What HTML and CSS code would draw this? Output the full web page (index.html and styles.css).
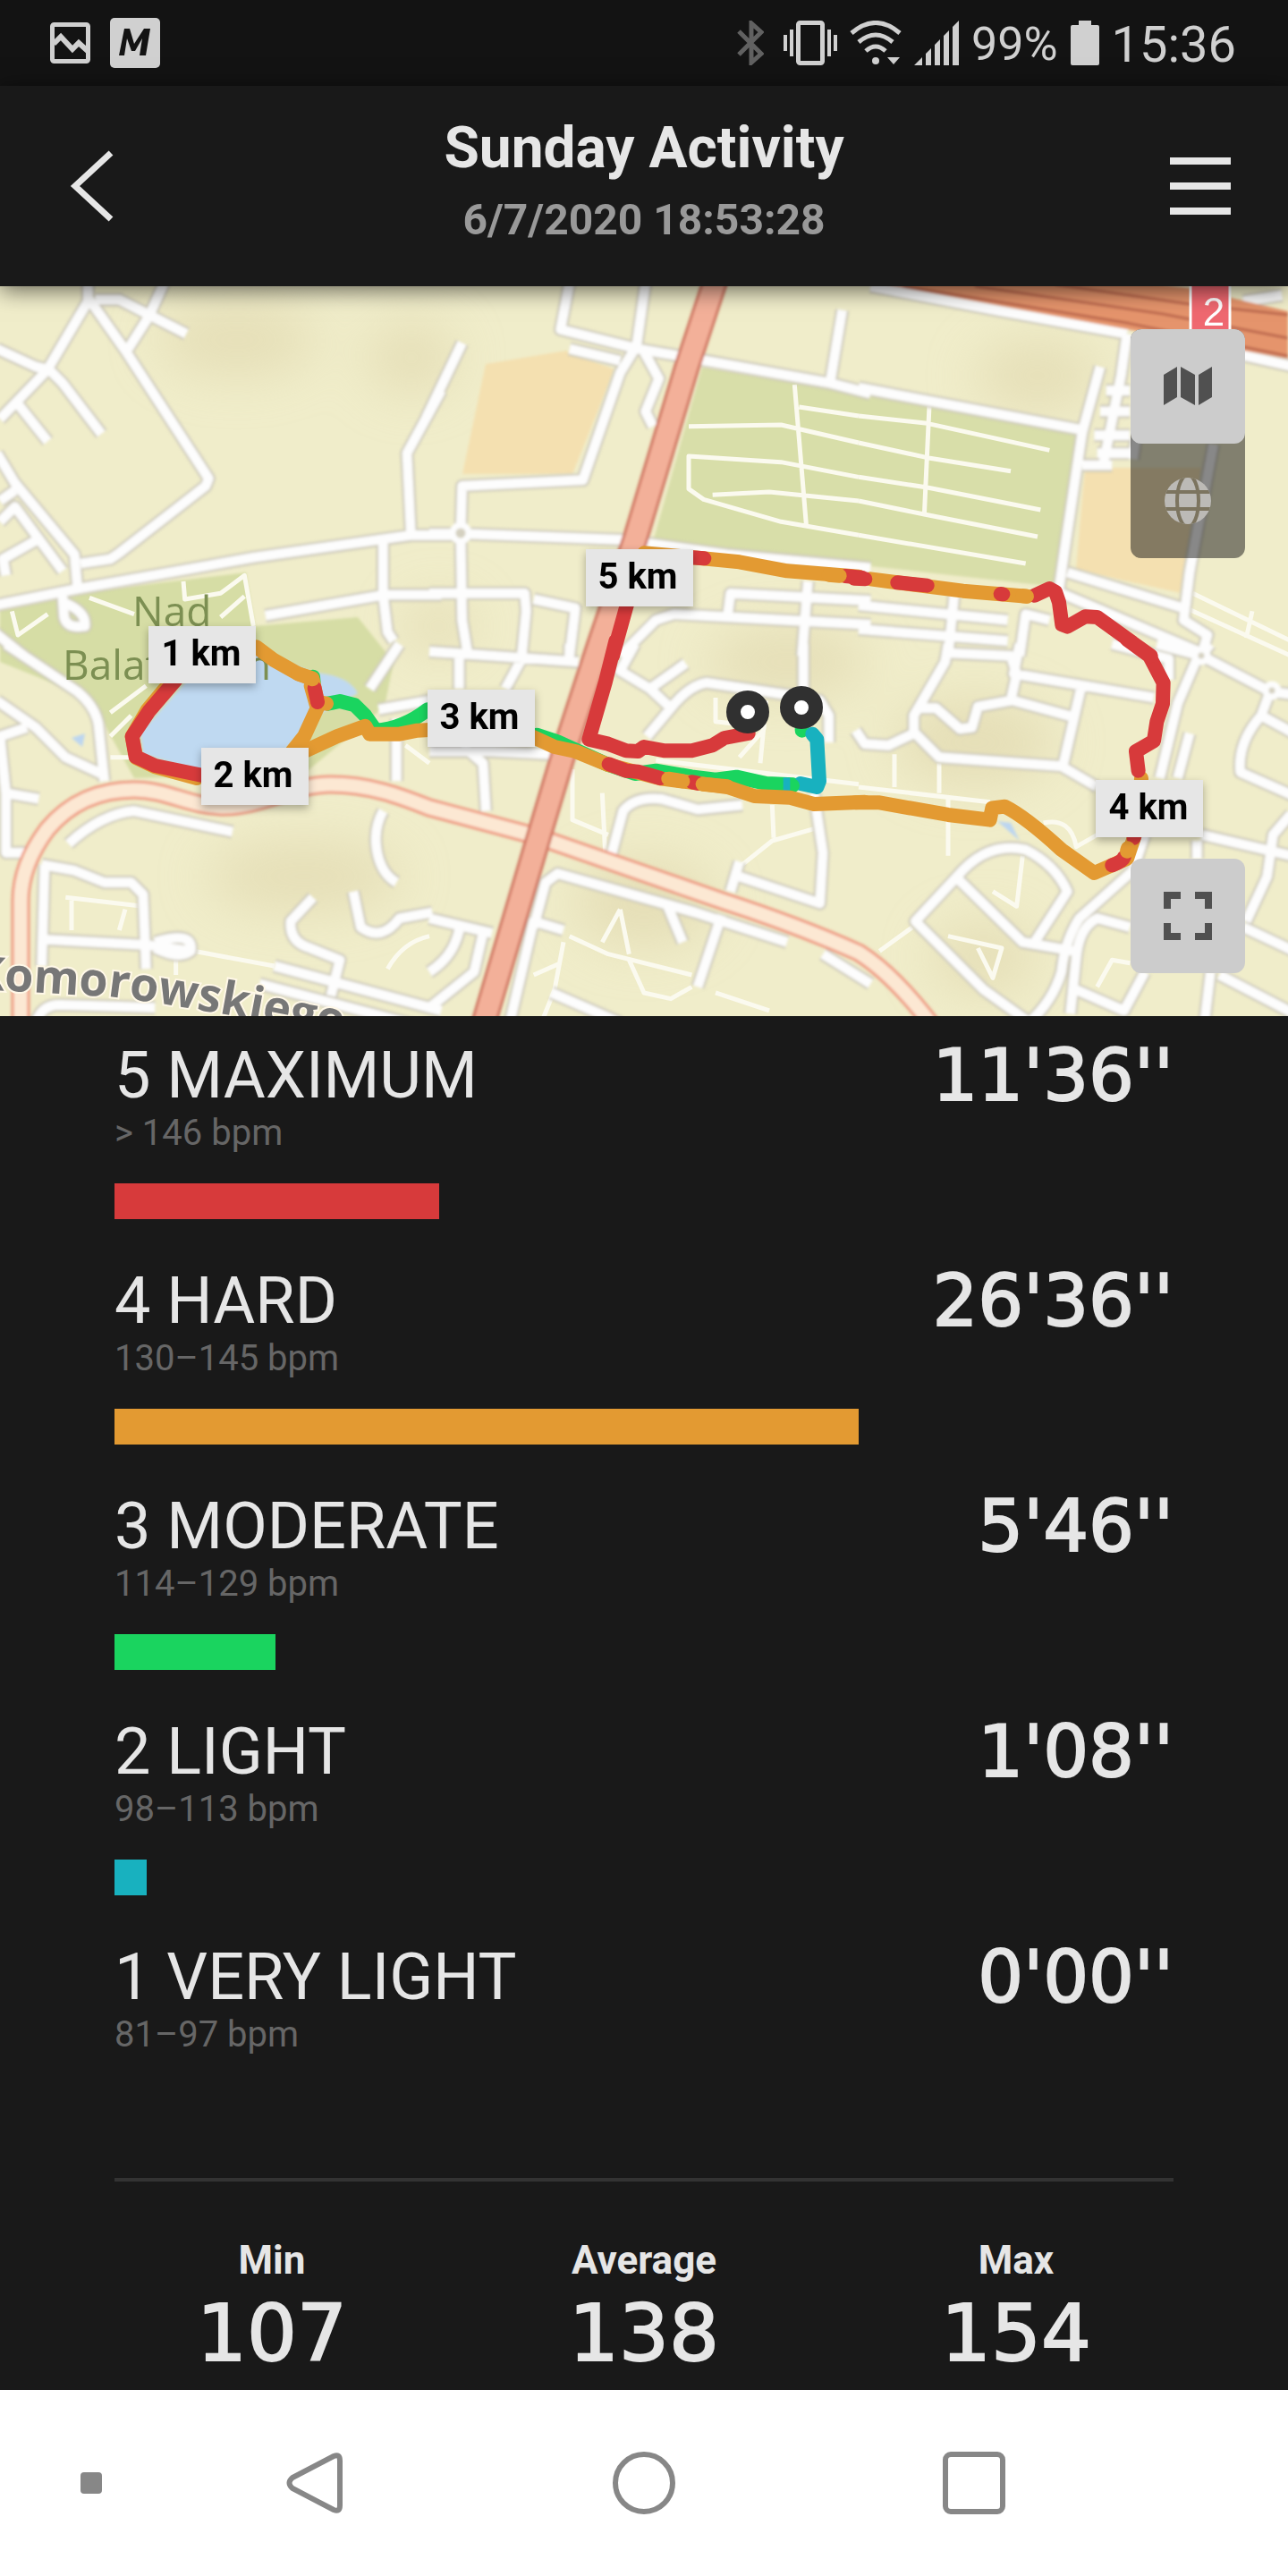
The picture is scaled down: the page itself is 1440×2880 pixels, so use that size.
FILE: index.html
```html
<!DOCTYPE html>
<html lang="en">
<head>
<meta charset="utf-8">
<meta name="viewport" content="width=device-width, initial-scale=1">
<title>Sunday Activity</title>
<link rel="stylesheet" href="styles.css">
</head>
<body>
<div class="status">
  <div class="status-group">
    <svg class="status-photo" viewBox="0 0 45 46" aria-hidden="true"><rect x="2.500" y="2.500" width="40" height="41" rx="2" fill="none" stroke="currentColor" stroke-width="5"/><path d="M4 24 12 16 25 30 32 23 42 32" fill="none" stroke="currentColor" stroke-width="6"/></svg>
    <svg class="status-app" viewBox="0 0 56 56" aria-hidden="true"><rect width="56" height="56" rx="5" fill="currentColor"/><path d="M10 42 16 12H22L27 29 38 12H45L40 42H33L36 23 28 37H24L19 23 16 42Z" fill="#131313"/></svg>
  </div>
  <div class="status-group">
    <svg class="status-bt" viewBox="0 0 30 50" aria-hidden="true"><path d="M2 12 27 37 16 47V3L27 13 2 38" fill="none" stroke="currentColor" stroke-width="5"/></svg>
    <svg class="status-vibrate" viewBox="0 0 60 50" aria-hidden="true"><path d="M2 16V34M9 10V40M51 10V40M58 16V34" stroke="currentColor" stroke-width="4"/><rect x="16.500" y="2.500" width="27" height="45" rx="2" fill="none" stroke="currentColor" stroke-width="5"/></svg>
    <svg class="status-wifi" viewBox="0 0 58 50" aria-hidden="true"><g fill="none" stroke="currentColor" stroke-width="5"><path d="M2 14Q29-9 56 14M10 24Q29 8 48 24M18 34Q29 24 40 34"/></g><circle cx="29" cy="45" r="4" fill="currentColor"/><path d="M42 41H56L49 49Z" fill="currentColor"/></svg>
    <svg class="status-signal" viewBox="0 0 50 50" aria-hidden="true"><path d="M0 50 9 41V50ZM13 37 19 31V50H13ZM23 27 29 21V50H23ZM33 17 39 11V50H33ZM43 7 50 0V50H43Z" fill="currentColor"/></svg>
    <span class="status-battery-text">99%</span>
    <svg class="status-battery" viewBox="0 0 32 50" aria-hidden="true"><path d="M9 0H23V5H30Q32 5 32 7V48Q32 50 30 50H2Q0 50 0 48V7Q0 5 2 5H9Z" fill="currentColor"/></svg>
    <time class="status-time">15:36</time>
  </div>
</div>

<header class="header">
  <button class="header-button" type="button" aria-label="Back"><svg viewBox="0 0 68 80" aria-hidden="true"><path d="M60 3 20 40 60 77" fill="none" stroke="currentColor" stroke-width="7"/></svg></button>
  <div class="header-text">
    <h1>Sunday Activity</h1>
    <p>6/7/2020 18:53:28</p>
  </div>
  <button class="header-button" type="button" aria-label="Menu"><svg viewBox="0 0 68 80" aria-hidden="true"><path d="M0 12H68M0 40H68M0 68H68" stroke="currentColor" stroke-width="8"/></svg></button>
</header>

<section class="map" aria-label="Route map">
<svg class="map-canvas" viewBox="0 320 1440 816" preserveAspectRatio="xMidYMid slice">
  <defs>
    <filter id="soft" x="-20%" y="-20%" width="140%" height="140%"><feGaussianBlur stdDeviation="28"/></filter>
    <filter id="edge"><feGaussianBlur stdDeviation="1.500"/></filter>
    <filter id="label-shadow" x="-20%" y="-30%" width="140%" height="180%"><feDropShadow dx="0" dy="4" stdDeviation="5" flood-opacity=".3"/></filter>
    <path id="street-name" d="M-30 1106 50 1110 130 1115C200 1124 260 1135 440 1170"/>
    <g id="roads">
      <g transform="translate(0 310) scale(.33333)">
        <path d="M295 20V80L165 300 145 325 0 475M-10 240 120 300 165 310 210 355 340 525M60 425 160 550M320 75H400L625 190M300 75 420 245 700 675 690 700 400 925 370 945 270 960M550 20 500 130 430 240M-10 590 50 690 250 930 260 1040M0 750 50 715M0 820 50 770 210 985M125 880 10 945 20 1000M-40 1105 260 1045 850 940 1380 865H1560M1480 380 1365 590 1378 860M890 1135 1290 1065H1480M1285 890V1065L1300 1190 1320 1220M210 1070 215 1140Q225 1180 285 1170 290 1120 210 1090M-20 1190 80 1270"/>
      </g>
      <g transform="translate(480 310) scale(.33333)">
        <path d="M470 20 440 175 700 240 900 275 1345 355 1480 390M725 20 695 230 640 320 515 680 110 700 105 860M470 240 640 280M720 250 770 340 725 450 750 500M110 220-10 470M1385 110 1345 350M0 860H105L640 880 1000 930 1480 975M105 860 110 1150 130 1270M0 1060H320L325 1120 310 1270M350 1080 490 1110 470 1270M1270 1020 1250 1270M1000 1140 1010 1060 1480 1085M640 1270 760 1150 820 1130 1480 1165"/>
      </g>
      <g transform="translate(960 310) scale(.33333)">
        <path d="M40 30 460 110 900 190M1280 260 1460 300M0 370 740 510M900 190 880 330 820 630M810 300 750 520 690 920 670 1060M750 630H850M930 540 920 610M830 380H910M810 450H910M790 530H910M800 590H910M1190 560 1110 990 1090 1150 1170 1200 1150 1270M700 990 1090 1110M680 1060 1150 1260M540 1270 560 1130 640 1150M320 1070 300 1270M0 1100 500 1150M0 1180 500 1220M1290 80 1420 60"/>
      </g>
      <g transform="translate(0 720) scale(.33333)">
        <path d="M20 0 260 160Q320 210 330 270L350 460M-10 190 120 280 220 380 350 440M90 280 0 310 20 500 130 520M20 500V700H110M140 740 250 760 350 800H440L480 840 490 1090M150 740 140 1080M130 990 500 1010 640 1030M520 1000Q650 960 640 1030 600 1060 520 1020M230 670Q340 570 450 560L780 630M1240 150 1340 0M1270 220 1440 190M1330 250V460M1285 560C1240 640 1260 760 1330 800M1050 850 975 930Q970 1000 1040 1020L1140 1060 1110 1180M1185 830 1210 950Q1280 1000 1340 920L1450 900M920 1080 1480 1230M870 1140 1400 1280M120 1270Q140 1210 200 1210L520 1220"/>
      </g>
      <g transform="translate(480 720) scale(.33333)">
        <path d="M0 25 500 60M100 40V150M310 50 255 150M470 0V50M690 0 640 90 740 150 810 215 730 310M740 150 860 65M810 215Q870 140 930 130L1200 170 1310 190 1340 240V330M1255 0V170M110 340 180 400 190 560M0 360H200L410 370M610 710 650 560Q690 510 780 520L900 555 1050 540M1290 500 1320 700 1310 870 1040 780M1010 830 1040 730M350 950 390 800 430 770 890 900 1200 1000M900 1150 980 910M800 880 850 1000M0 920 210 970M100 960Q80 1050 0 1100M180 970 150 1100 0 1220M270 1270 350 930 450 960M410 1170 640 1270M1320 1040 1480 1140"/>
      </g>
      <g transform="translate(960 720) scale(.33333)">
        <path d="M300 0 290 60 185 240V300L100 340 20 335-10 290M300 30 510 40 530 100 510 190 400 210 380 280 340 285 260 215H200M540 0 520 100 990 180M520 190 720 245M745 150 685 410M190 300 270 380 680 410 800 480M850 0 1040 50V120M1000 0 1150 40 1380 160 1460 170M1180 0 1130 60 1070 200 1010 450M1110 300 1070 450M1380 160 1350 240 1460 300M1350 240Q1270 330 1280 430L1460 510M1450 570 1390 640 1370 780 1300 930M1150 640 1450 710M1135 660V720M960 640 920 760 740 920Q690 1000 680 1100 650 1200 570 1270M560 1260 420 1160 190 930 330 780Q430 660 560 690 660 740 700 830L590 1000M335 790 550 1000 720 1030M910 950 800 920Q740 950 730 1050L710 1240M730 1160 890 1230 960 1100M1290 950 1460 1030M1210 1110 1460 1240M1180 1100 1160 1270"/>
      </g>
    </g>
    <g id="lanes">
      <g transform="translate(0 310) scale(.33333)"><path d="M615 1020 620 1080 740 1060 820 1000 850 1170M300 1075 450 1130M40 1120 60 1200 160 1130M740 1140 820 1070"/></g>
      <g transform="translate(480 310) scale(.33333)"><path d="M1225 360 1265 840M1240 435 1440 465M870 500 1180 495 1440 555M1440 670 1180 620 870 600V710L920 745 1180 820 1440 865M950 730 1140 720 1440 750"/></g>
      <g transform="translate(960 310) scale(.33333)"><path d="M0 465 230 490 640 580M0 555 230 605 510 650M0 670 230 705 610 780M0 750 220 795 600 870M0 865 560 960M238 410 220 800"/></g>
      <g transform="translate(960 310) scale(.33333)"><path d="M1120 1060 1450 1220M1100 1110 1450 1270M1320 1120 1300 1210"/></g>
      <g transform="translate(0 720) scale(.33333)"><path d="M220 850 480 880M240 860V960M420 890 400 960M650 1030 920 1080M370 230 490 140M370 310 440 240M370 380H440M1360 340 1440 400M590 1050V1110M1300 1090Q1350 1000 1440 980"/></g>
      <g transform="translate(480 720) scale(.33333)"><path d="M480 420V590L600 640M580 500 590 700M640 890 580 1000M640 890 670 1040M470 980 600 1040 880 1110M450 1000 420 1160 380 1260M670 1060 720 1170 810 1190 880 1150M350 1110 440 1070M1150 540 1155 650M1050 740 1150 660 1290 620M960 180V260L1130 280M1130 190 1110 400M760 390 1440 470M1120 290 1040 380M960 1170 1140 1230"/></g>
      <g transform="translate(960 720) scale(.33333)"><path d="M0 480 440 530M300 520V710M120 370V480M270 400V500M180 950 70 1030M550 710 530 880 450 830M300 980 480 1020 450 1120 400 1020M800 1150 850 1060 910 1070M620 600Q710 580 730 680L800 640"/></g>
    </g>
  </defs>

  <rect y="310" width="1440" height="840" fill="#f0edca"/>
  <g filter="url(#soft)" fill="#ddd3a8" opacity=".55">
    <ellipse cx="265" cy="380" rx="90" ry="40"/><ellipse cx="460" cy="400" rx="50" ry="40"/><ellipse cx="340" cy="980" rx="110" ry="40"/><ellipse cx="880" cy="740" rx="90" ry="40"/><ellipse cx="1160" cy="420" rx="70" ry="40"/><ellipse cx="1090" cy="830" rx="90" ry="50"/><ellipse cx="720" cy="1010" rx="80" ry="50"/><ellipse cx="490" cy="700" rx="40" ry="30"/><ellipse cx="1100" cy="1070" rx="60" ry="40"/>
  </g>
  <g filter="url(#edge)">
    <path d="M0 682 110 660 275 640 285 700 400 690 440 740 430 790 340 865 150 870 100 780 0 740Z" fill="#d6dda5"/>
    <path d="M785 410 960 438 1207 482 1180 656 730 606Z" fill="#d8dea9"/>
    <path d="M543 407 633 392 687 413 640 530 517 530ZM1213 523 1343 523 1320 663 1203 637Z" fill="#f4e0b0"/>
    <path d="M207 763 290 728 350 752Q390 755 400 775L367 793 350 803 320 837 227 863 160 843 157 820Z" fill="#bfd9f1"/>
    <path d="M80 825 95 820 92 835ZM1115 918 1130 920 1140 940Z" fill="#bcd6f0"/>
  </g>
  <use href="#lanes" fill="none" stroke="#fbfaef" stroke-width="15" stroke-linejoin="round"/>
  <g filter="url(#edge)" fill="none" stroke-linejoin="round">
    <use href="#roads" stroke="#cecabc" stroke-width="46"/>
    <use href="#roads" stroke="#fdfdfd" stroke-width="32"/>
    <circle cx="515" cy="596" r="9" stroke="#fdfdfd" stroke-width="7" fill="#d4d0c0"/>
    <circle cx="1343" cy="733" r="7" stroke="#fdfdfd" stroke-width="7" fill="#d4d0c0"/>
    <circle cx="1422" cy="772" r="7" stroke="#fdfdfd" stroke-width="7" fill="#d4d0c0"/>
    <g id="ring-road">
      <path d="M23 1150V1007Q23 967 53 927 90 883 150 883C187 883 213 902 250 902 293 902 327 877 370 877 413 877 447 890 480 903L600 935 807 1007Q893 1035 960 1065 1000 1090 1045 1150" stroke="#ee9a82" stroke-width="21"/>
      <path d="M23 1150V1007Q23 967 53 927 90 883 150 883C187 883 213 902 250 902 293 902 327 877 370 877 413 877 447 890 480 903L600 935 807 1007Q893 1035 960 1065 1000 1090 1045 1150" stroke="#fce8d3" stroke-width="15"/>
    </g>
    <path d="M801 310 768 410 710 603 670 720 633 833 607 920 539 1150" stroke="#cf7461" stroke-width="29"/>
    <path d="M801 310 768 410 710 603 670 720 633 833 607 920 539 1150" stroke="#f3b099" stroke-width="23"/>
    <path d="M990 318 1147 300 1330 322 1440 348V401L1260 368Z" fill="#e5946c"/>
    <path d="M1010 320 1260 361 1440 398M1090 320 1300 351 1440 378M1180 318 1330 340 1440 352" stroke="#bc684e" stroke-width="3"/>
  </g>
  <rect x="1331" y="312" width="44" height="60" fill="#ef6870" stroke="#fff" stroke-width="3"/>
  <text class="route-number" x="1357" y="364">2</text>
  <text class="place" x="148" y="700">Nad</text>
  <text class="place" x="70" y="760">Balatonem</text>
  <text class="street"><textPath href="#street-name">Komorowskiego</textPath></text>

  <g fill="none" stroke-width="48" stroke-linecap="round" stroke-linejoin="round">
    <g transform="translate(0 720) scale(.33333)">
      <path class="z3" d="M1434 220Q1350 285 1260 290L1225 240 1190 205 1140 192 1100 200"/>
      <path class="z3" d="M1050 110 1052 130"/>
      <path class="z4" d="M570 130 495 220 443 310 457 382 520 412 660 450M860 10 920 55 1000 100 1048 115 1065 195 1095 200M1043 140 1064 215 1020 310 980 360M1440 288 1400 290 1340 302 1240 302 1225 275 1130 310 1010 365"/>
      <path class="z5" d="M590 120 500 225 443 310 455 378 520 408 700 445M1055 148 1065 195"/>
      <path class="z4" d="M1000 100 1048 118"/>
    </g>
    <g transform="translate(480 720) scale(.33333)">
      <path class="z3" d="M1250 230V290M360 305 430 328 600 405 690 435 760 425 880 445 960 455 1030 446 1130 468 1220 472"/>
      <path class="z2" d="M1285 302 1300 320 1308 460 1300 480 1245 468"/>
      <path class="z3" d="M1205 475H1218"/>
      <path class="z2" d="M1187 472H1210" stroke-linecap="butt"/>
      <path class="z4" d="M340 308 420 345 490 360 600 405 780 452 870 463 1000 480 1090 510 1210 515 1290 537 1460 530"/>
      <path class="z5" d="M602 403 660 425 700 428 775 450M882 463 900 467"/>
      <path class="z4" d="M802 452 850 460M917 470 1000 478"/>
      <path class="z5" d="M625-10 590 130 535 320 600 335 660 358 700 360 720 345 790 358H880L950 340 990 315 1070 300"/>
    </g>
    <g transform="translate(960 720) scale(.33333)">
      <path class="z4" d="M-10 532H70L300 573 440 590 448 550 490 545Q560 580 680 690L790 768 900 720 940 600 948 450"/>
      <path class="z5" d="M850 742Q885 730 890 715M923 650 930 620M938 425 930 360 990 325 1000 260 1020 200 1022 130 975 40 900-15"/>
      <path class="z4" d="M900 695 903 685"/>
    </g>
    <g transform="translate(480 310) scale(.33333)">
      <path class="z4" d="M720 925 940 945 1040 955 1200 985 1440 1004"/>
      <path class="z5" d="M860 938 922 943M665 1090 615 1270M1395 1002 1450 1007"/>
      <path class="z4" d="M1340 998 1376 1001"/>
    </g>
    <g transform="translate(960 310) scale(.33333)">
      <path class="z4" d="M40 1012 100 1020 350 1052 565 1070"/>
      <path class="z5" d="M-15 1010 22 1012M130 1024 230 1034M476 1062 484 1063M590 1067 640 1044 660 1055 672 1090 682 1165 700 1172 760 1138 800 1140 980 1270"/>
      <path class="z4" d="M550 1069 564 1070"/>
    </g>
  </g>
  <g fill="#fff" stroke="#303030" stroke-width="16">
    <circle cx="836" cy="796" r="16"/><circle cx="896" cy="791" r="16"/>
  </g>
  <g class="km">
    <g><rect x="655" y="614" width="120" height="64"/><text x="713" y="658">5 km</text></g>
    <g><rect x="166" y="700" width="120" height="64"/><text x="225" y="744">1 km</text></g>
    <g><rect x="225" y="836" width="120" height="64"/><text x="283" y="880">2 km</text></g>
    <g><rect x="478" y="771" width="120" height="64"/><text x="536" y="815">3 km</text></g>
    <g><rect x="1225" y="872" width="120" height="64"/><text x="1284" y="916">4 km</text></g>
  </g>
</svg>
  <div class="map-controls">
    <div class="map-layers">
      <button class="map-button map-button-active" type="button" aria-label="Map view"><svg viewBox="0 0 54 54" aria-hidden="true"><path d="M0 14 15 5V39L0 48ZM19 5 35 14V48L19 39ZM39 14 54 5V39L39 48Z" fill="currentColor"/></svg></button>
      <button class="map-button" type="button" aria-label="Satellite view"><svg viewBox="0 0 54 54" aria-hidden="true"><defs><clipPath id="globe"><circle cx="27" cy="27" r="26"/></clipPath></defs><circle cx="27" cy="27" r="26" fill="#bcbab6"/><g clip-path="url(#globe)" fill="none" stroke="#7c745f" stroke-width="4"><path d="M0 17H54M0 36H54"/><ellipse cx="27" cy="27" rx="12" ry="29"/></g></svg></button>
    </div>
    <button class="map-button map-button-active" type="button" aria-label="Full screen"><svg viewBox="0 0 54 54" aria-hidden="true"><path d="M4 19V4H19M35 4H50V19M50 35V50H35M19 50H4V35" fill="none" stroke="currentColor" stroke-width="8"/></svg></button>
  </div>
</section>

<main class="content">
  <ul class="zones">
    <li class="zone"><h2>5 MAXIMUM</h2><span class="zone-time">11'36''</span><p>&gt; 146 bpm</p><div class="track"><div class="bar bar-5" style="width:30.700%"></div></div></li>
    <li class="zone"><h2>4 HARD</h2><span class="zone-time">26'36''</span><p>130–145 bpm</p><div class="track"><div class="bar bar-4" style="width:70.300%"></div></div></li>
    <li class="zone"><h2>3 MODERATE</h2><span class="zone-time">5'46''</span><p>114–129 bpm</p><div class="track"><div class="bar bar-3" style="width:15.200%"></div></div></li>
    <li class="zone"><h2>2 LIGHT</h2><span class="zone-time">1'08''</span><p>98–113 bpm</p><div class="track"><div class="bar bar-2" style="width:3%"></div></div></li>
    <li class="zone"><h2>1 VERY LIGHT</h2><span class="zone-time">0'00''</span><p>81–97 bpm</p><div class="track"></div></li>
  </ul>
  <dl class="stats">
    <div><dt>Min</dt><dd>107</dd></div>
    <div><dt>Average</dt><dd>138</dd></div>
    <div><dt>Max</dt><dd>154</dd></div>
  </dl>
</main>

<nav class="nav" aria-label="System">
  <button class="nav-dot" type="button" aria-label="Show or hide bar"></button>
  <button type="button" aria-label="Back"><svg viewBox="0 0 72 72" aria-hidden="true"><path d="M58 6Q65 3 65 11V61Q65 69 58 66L12 42Q5 36 12 30Z"/></svg></button>
  <button type="button" aria-label="Home"><svg viewBox="0 0 72 72" aria-hidden="true"><circle cx="36" cy="36" r="32"/></svg></button>
  <button type="button" aria-label="Recent apps"><svg viewBox="0 0 72 72" aria-hidden="true"><rect x="4" y="4" width="64" height="64" rx="6"/></svg></button>
</nav>
</body>
</html>
```
FILE: styles.css
```css
* { box-sizing: border-box; }

body {
  margin: 0;
  min-height: 100vh;
  display: flex;
  flex-direction: column;
  background: #191919;
  color: #e6e6e6;
  font-family: Roboto, "Liberation Sans", sans-serif;
}

h1, h2, p, ul, dl, dd { margin: 0; padding: 0; }

button {
  margin: 0;
  padding: 0;
  border: 0;
  background: none;
  color: inherit;
  font: inherit;
}

svg { display: block; }

/* Status bar */
.status {
  display: flex;
  justify-content: space-between;
  align-items: center;
  height: 96px;
  padding: 0 58px 0 56px;
  background: #131313;
  color: #d0d0d0;
}

.status-group {
  display: flex;
  align-items: center;
  gap: 14px;
}

.status-photo { width: 45px; height: 46px; margin-right: 8px; }
.status-app { width: 56px; height: 56px; }
.status-bt { width: 30px; height: 50px; margin-right: 8px; color: #616161; }
.status-vibrate { width: 60px; height: 50px; }
.status-wifi { width: 58px; height: 50px; }
.status-signal { width: 50px; height: 50px; }
.status-battery { width: 32px; height: 50px; }
.status-battery-text { padding-top: 4px; font-size: 52px; line-height: 64px; }
.status-time { padding-top: 4px; font-size: 56px; line-height: 64px; }

/* Header */
.header {
  position: relative;
  z-index: 1;
  display: flex;
  justify-content: space-between;
  align-items: center;
  min-height: 224px;
  padding: 0 64px;
  box-shadow: 0 4px 24px rgba(0, 0, 0, .6);
  background: #191919;
}

.header-text {
  padding-bottom: 14px;
  text-align: center;
}

.header h1 {
  margin-bottom: 14px;
  font-size: 64px;
  line-height: 76px;
  font-weight: 700;
}

.header p {
  color: #999;
  font-size: 48px;
  line-height: 56px;
  font-weight: 700;
}

.header-button svg { width: 68px; height: 80px; }

/* Map */
.map {
  position: relative;
  height: 816px;
  overflow: hidden;
}

.map-canvas { width: 100%; height: 100%; }

.map-controls {
  position: absolute;
  top: 48px;
  right: 48px;
  bottom: 48px;
  display: flex;
  flex-direction: column;
  justify-content: space-between;
}

.map-layers {
  border-radius: 12px;
  background: rgba(20, 20, 20, .5);
}

.map-button {
  display: flex;
  align-items: center;
  justify-content: center;
  width: 128px;
  height: 128px;
  border-radius: 12px;
}

.map-button-active { background: #ccc; color: #505050; }
.map-button svg { width: 54px; height: 54px; }

.z5 { stroke: #d73a3b; }
.z4 { stroke: #e39a32; }
.z3 { stroke: #1ad45f; }
.z2 { stroke: #18b1bf; }

.km rect { fill: #e6e6e6; filter: url(#label-shadow); }
.km text { fill: #000; font-size: 40px; font-weight: 700; text-anchor: middle; }

.place {
  fill: #7c8f52;
  font-family: "Open Sans", sans-serif;
  font-size: 46px;
  font-weight: 500;
}

.street {
  fill: #777;
  stroke: #fff8e8;
  stroke-width: 4px;
  paint-order: stroke;
  font-family: "Open Sans", sans-serif;
  font-size: 52px;
  font-weight: 700;
}

.route-number {
  fill: #fff;
  font-family: "Liberation Sans", sans-serif;
  font-size: 44px;
  text-anchor: middle;
}

/* Heart rate zones */
.content { flex: 1; padding: 27px 96px 12px; }

.zones {
  margin: 0 32px;
  border-bottom: 4px solid #333;
  padding-bottom: 12px;
  list-style: none;
}

.zone {
  display: grid;
  grid-template-columns: 1fr auto;
  padding-bottom: 52px;
}

.zone h2 {
  font-size: 72px;
  line-height: 80px;
  font-weight: 400;
}

.zone p {
  grid-column: 1 / -1;
  color: #666;
  font-size: 40px;
  line-height: 48px;
}

.zone-time, .stats dd {
  font-family: "DejaVu Sans", sans-serif;
  -webkit-text-stroke: 2px currentColor;
}

.zone-time { font-size: 80px; line-height: 80px; }

.track {
  grid-column: 1 / -1;
  height: 40px;
  margin-top: 32px;
}

.bar { height: 100%; }
.bar-5 { background: #d73a3b; }
.bar-4 { background: #e39a32; }
.bar-3 { background: #1ad45f; }
.bar-2 { background: #18b1bf; }

/* Summary */
.stats {
  display: grid;
  grid-template-columns: repeat(3, 1fr);
  padding-top: 62px;
  text-align: center;
}

.stats dt {
  margin-bottom: 6px;
  font-size: 44px;
  line-height: 52px;
  font-weight: 700;
}

.stats dd { font-size: 88px; line-height: 100px; }

/* System navigation */
.nav {
  position: relative;
  display: grid;
  grid-template-columns: repeat(3, 369px);
  justify-content: center;
  justify-items: center;
  align-items: center;
  height: 208px;
  background: #fff;
}

.nav svg {
  width: 72px;
  height: 72px;
  fill: none;
  stroke: #878787;
  stroke-width: 6px;
}

.nav-dot {
  position: absolute;
  left: 90px;
  top: 92px;
  width: 24px;
  height: 24px;
  border-radius: 4px;
  background: #878787;
}
```
